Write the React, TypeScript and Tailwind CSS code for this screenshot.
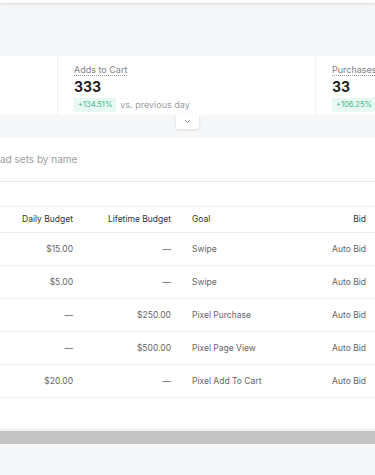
import { FiChevronDown } from "react-icons/fi";

const rows = [
  { daily: "$15.00", lifetime: "—", goal: "Swipe", bid: "Auto Bid" },
  { daily: "$5.00", lifetime: "—", goal: "Swipe", bid: "Auto Bid" },
  { daily: "—", lifetime: "$250.00", goal: "Pixel Purchase", bid: "Auto Bid" },
  { daily: "—", lifetime: "$500.00", goal: "Pixel Page View", bid: "Auto Bid" },
  { daily: "$20.00", lifetime: "—", goal: "Pixel Add To Cart", bid: "Auto Bid" },
];

function Stat({ label, value, change, note }: { label: string; value: string; change: string; note?: string }) {
  return (
    <div className="flex flex-col">
      <span className="w-fit border-b border-dotted border-[#9ea3a8] text-[9px] leading-[11px] text-[#7d8288]">{label}</span>
      <span className="mt-[3px] text-[14px] font-bold leading-[16px] text-[#222]">{value}</span>
      <div className="mt-[3px] flex items-center gap-[4px] whitespace-nowrap">
        <span className="bg-[#e8f8f2] px-[4px] py-[3px] text-[7.5px] leading-[8px] text-[#3cb98d]">{change}</span>
        {note && <span className="text-[9px] text-[#9a9ea3]">{note}</span>}
      </div>
    </div>
  );
}

export default function App() {
  return (
    <div className="h-[475px] w-[375px] overflow-hidden bg-[#f6f7f9] font-['Inter',sans-serif]">
      <div className="h-[4px] border-b border-[#e0e2e5] bg-white shadow-[0_1px_4px_rgba(0,0,0,0.06)]" />

      <div className="mt-[52px] flex h-[59px] bg-white">
        <div className="w-[58px] border-r border-[#eff0f2]" />
        <div className="w-[258px] border-r border-[#eff0f2] pl-[16px] pt-[8px]">
          <Stat label="Adds to Cart" value="333" change="+134.51%" note="vs. previous day" />
        </div>
        <div className="flex-1 overflow-hidden pl-[16px] pt-[8px]">
          <Stat label="Purchases" value="33" change="+106.25%" />
        </div>
      </div>

      <div className="-mt-px flex justify-center">
        <div className="flex h-[15px] w-[23px] items-center justify-center rounded-b-[2px] bg-white shadow-[0_1px_3px_rgba(0,0,0,0.12)]">
          <FiChevronDown className="h-[9px] w-[9px] text-[#555]" />
        </div>
      </div>

      <div className="mt-[9px] bg-white">
        <div className="flex h-[44px] items-center overflow-hidden border-b border-[#e6e8ea]">
          <span className="-ml-[36px] whitespace-nowrap text-[10px] text-[#9a9ea3]">Search ad sets by name</span>
        </div>

        <div className="h-[24px]" />

        <div className="grid grid-cols-[73px_98px_1fr_auto] items-center border-y border-[#eceef0] pr-[9px] text-[8.5px] text-[#333]">
          <div className="flex h-[25px] items-center justify-end">Daily Budget</div>
          <div className="text-right">Lifetime Budget</div>
          <div className="pl-[21px]">Goal</div>
          <div className="text-right">Bid</div>
        </div>

        {rows.map((row, i) => (
          <div
            key={i}
            className="grid h-[33px] grid-cols-[73px_98px_1fr_auto] items-center border-b border-[#eceef0] pr-[9px] text-[8.5px] text-[#666]"
          >
            <div className="text-right">{row.daily}</div>
            <div className="text-right">{row.lifetime}</div>
            <div className="pl-[21px]">{row.goal}</div>
            <div className="text-right">{row.bid}</div>
          </div>
        ))}

        <div className="h-[32px] border-b border-[#eceef0]" />
      </div>

      <div className="mt-px h-[13px] bg-[#c3c3c3]" />
    </div>
  );
}
